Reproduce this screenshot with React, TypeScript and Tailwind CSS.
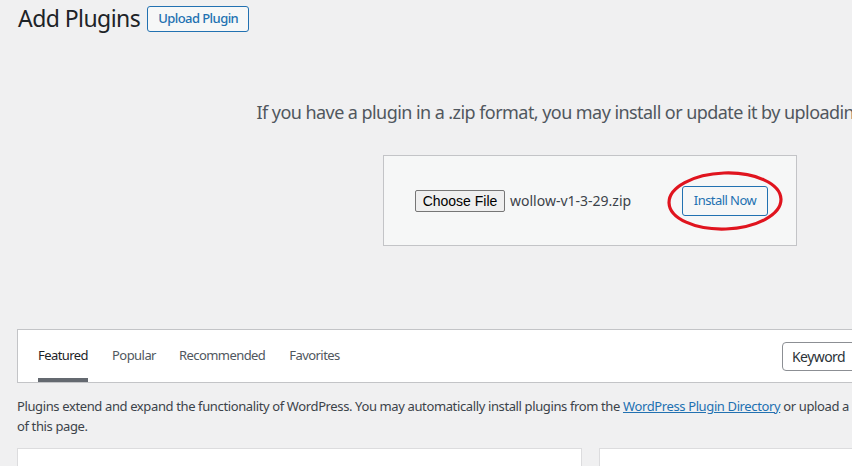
import React from 'react'

export default function App() {
  return (
    <div className="w-[852px] h-[466px] overflow-hidden bg-[#f0f0f1] text-[#3c434a] font-['Noto_Sans',sans-serif] tracking-[-0.035em]">
      <div className="ml-[17px] w-[1146px] relative">
        {/* header */}
        <div className="flex items-center pt-[4px]">
          <h1 className="ml-[1px] text-[23px] leading-[29px] text-[#1d2327] font-normal">Add Plugins</h1>
          <button className="ml-[7px] h-[26px] w-[102px] rounded-[3px] border border-[#2271b1] bg-[#f6f7f7] text-[#2271b1] text-[13px] font-medium leading-none">
            Upload Plugin
          </button>
        </div>

        {/* upload area */}
        <p className="mt-[67px] text-center text-[18px] leading-[24px] text-[#50575e] whitespace-nowrap">
          If you have a plugin in a .zip format, you may install or update it by uploading it here.
        </p>
        <div className="relative mx-auto mt-[31px] w-[414px] h-[91px] border border-[#c3c4c7] bg-[#f6f7f7] flex items-center pl-[31px]">
          <button className="h-[22px] w-[90px] rounded-[2px] border border-[#767676] bg-[#efefef] text-black text-[14px] leading-none tracking-normal font-['Liberation_Sans',sans-serif]">
            Choose File
          </button>
          <span className="ml-[5px] text-[14px] tracking-normal text-[#3c434a]">wollow-v1-3-29.zip</span>
          <button className="ml-auto mr-[28px] h-[30px] w-[86px] rounded-[3px] border border-[#2271b1] bg-[#f6f7f7] text-[#2271b1] text-[13px] leading-none">
            Install Now
          </button>
          <svg className="absolute left-[283px] top-[15px] pointer-events-none" width="118" height="62" viewBox="0 0 118 62">
            <ellipse cx="58" cy="30" rx="56" ry="28" fill="none" stroke="#e0141e" strokeWidth="3.2" transform="rotate(-2 58 30)" />
          </svg>
        </div>

        {/* filter bar */}
        <div className="mt-[83px] h-[54px] border border-[#c3c4c7] bg-white flex items-stretch justify-between px-[10px]">
          <ul className="flex items-stretch text-[13px]">
            <li className="ml-[10px] mr-[12px] flex items-center border-b-4 border-[#646970] text-[#1d2327] pt-[4px]">Featured</li>
            <li className="ml-[12px] mr-[11px] flex items-center border-b-4 border-transparent text-[#50575e] pt-[4px]">Popular</li>
            <li className="mx-[12px] flex items-center border-b-4 border-transparent text-[#50575e] pt-[4px]">Recommended</li>
            <li className="mx-[12px] flex items-center border-b-4 border-transparent text-[#50575e] pt-[4px]">Favorites</li>
          </ul>
          <div className="flex items-center gap-[4px]">
            <div className="h-[29px] w-[100px] border border-[#8c8f94] rounded-[4px] bg-white flex items-center justify-between pl-[9px] pr-[8px] text-[14px] text-[#2c3338]">
              Keyword
              <svg width="8" height="6" viewBox="0 0 8 6"><path d="M0 0h8L4 5z" fill="#555" /></svg>
            </div>
            <div className="h-[29px] w-[266px] border border-[#8c8f94] rounded-[4px] bg-white" />
          </div>
        </div>

        {/* description */}
        <p className="mt-[13px] text-[13px] leading-[20px] text-[#3c434a] tracking-[-0.029em]">
          <span className="whitespace-nowrap">
            Plugins extend and expand the functionality of WordPress. You may automatically install plugins from the{' '}
            <a className="text-[#2271b1] underline">WordPress Plugin Directory</a> or upload a plugin in .zip format by clicking the button at the top
          </span>
          <br />
          of this page.
        </p>

        {/* cards */}
        <div className="mt-[12px] flex gap-[17px]">
          <div className="w-[565px] h-[200px] bg-white border border-[#dcdcde]" />
          <div className="w-[565px] h-[200px] bg-white border border-[#dcdcde]" />
        </div>
      </div>
    </div>
  )
}
